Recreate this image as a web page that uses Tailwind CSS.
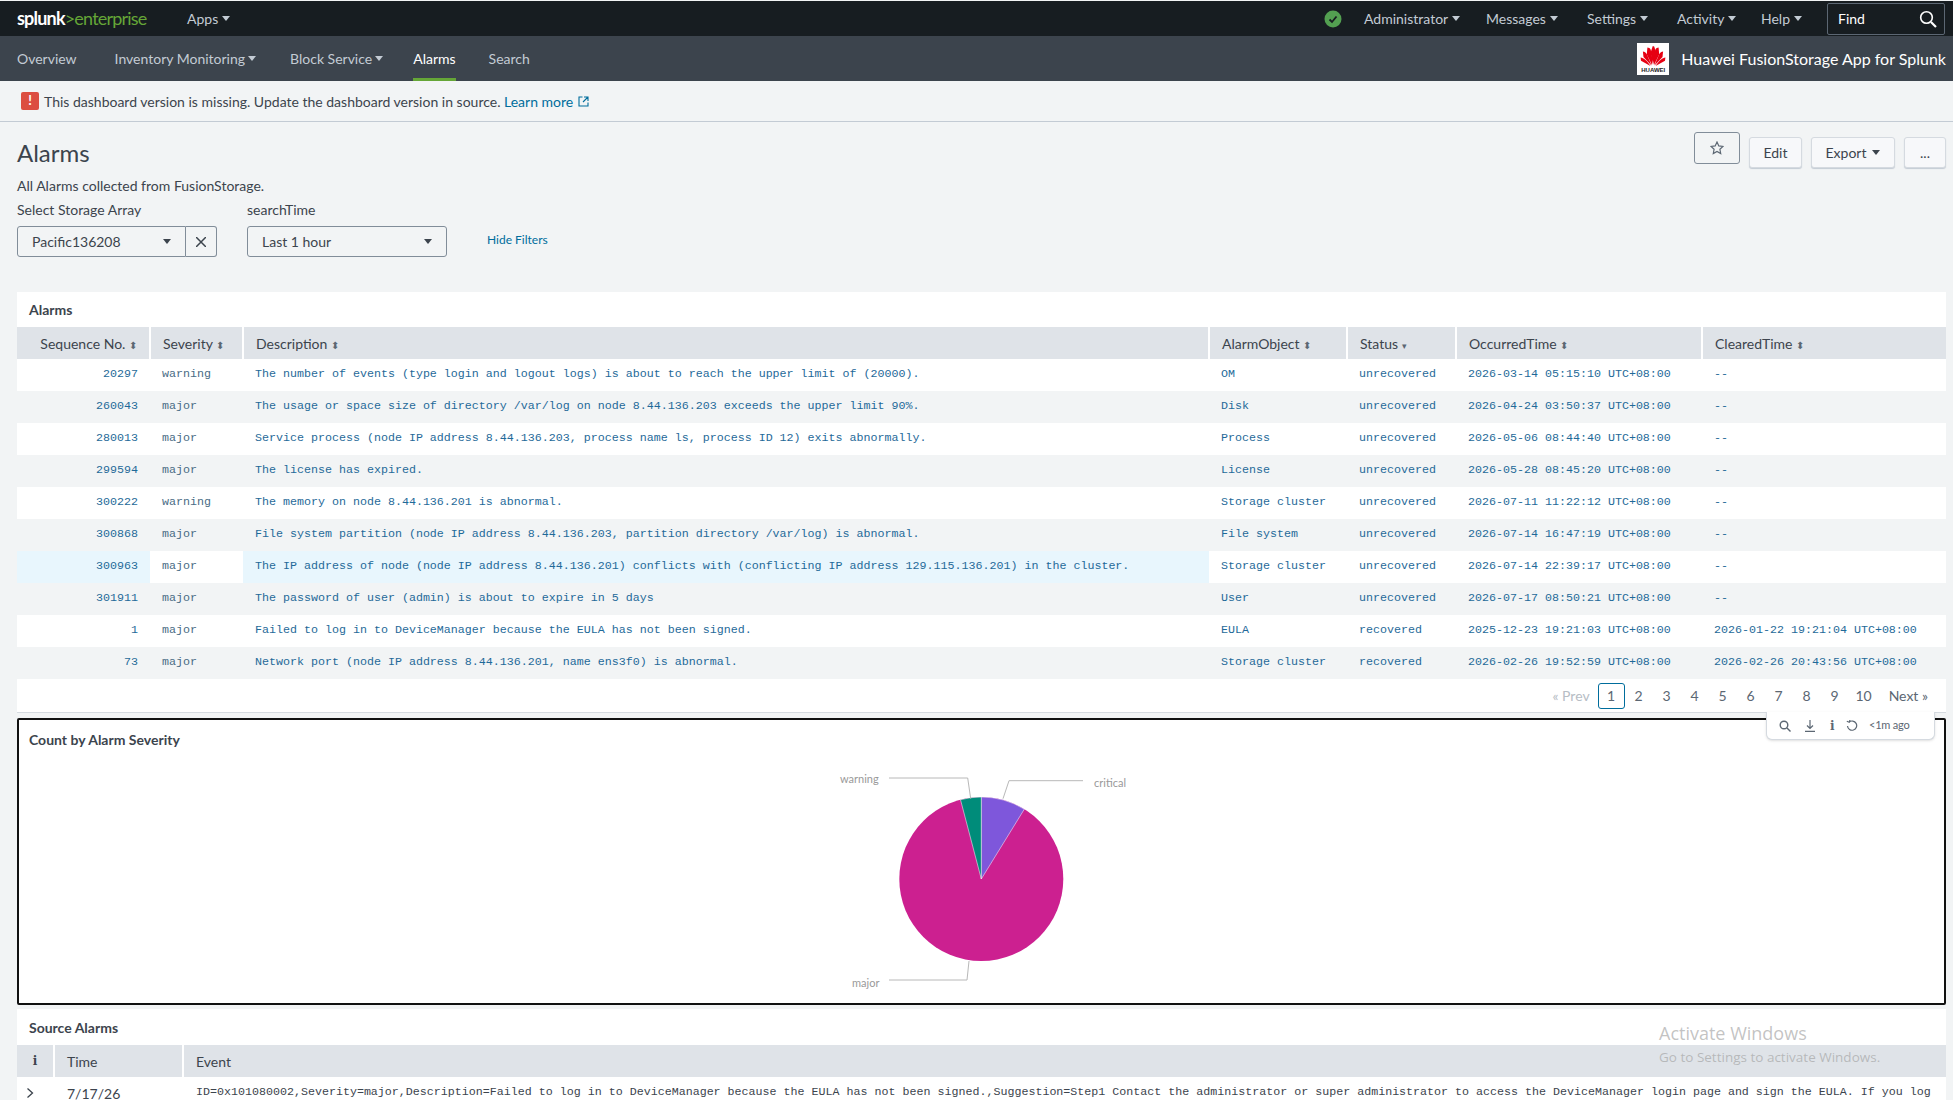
<!doctype html>
<html lang="en">
  <head>
    <meta charset="UTF-8" />
    <title>Alarms | Splunk</title>
    <script src="https://cdn.jsdelivr.net/npm/@tailwindcss/browser@4"></script>
  </head>
  <body class="h-[1100px] overflow-hidden bg-[#f2f4f5] font-['Lato',sans-serif] text-[14px] text-[#3c444d]">
    <div class="relative h-[1100px] overflow-hidden pt-px">
      <!-- top bar -->
      <header class="flex h-[35px] items-center bg-[#171d21] pl-[17px] pr-[8px] text-[#c3cbd4]">
        <span class="w-[170px] text-[18px] font-bold tracking-[-0.8px] text-white">splunk<span class="font-normal text-[#65a637]">&gt;enterprise</span></span>
        <span class="flex items-center gap-1">Apps <i class="h-0 w-0 border-x-[4px] border-t-[5px] border-x-transparent border-t-[#c3cbd4]"></i></span>
        <div class="ml-auto flex items-center">
          <svg class="mr-[22px] h-[18px] w-[18px]" viewBox="0 0 18 18">
            <circle cx="9" cy="9" r="8.5" fill="#53a051" />
            <path d="M5.5 9.5 8 12l4.5-5.5" fill="none" stroke="#171d21" stroke-width="1.8" />
          </svg>
          <span class="flex w-[122px] items-center gap-1">Administrator <i class="h-0 w-0 border-x-[4px] border-t-[5px] border-x-transparent border-t-[#c3cbd4]"></i></span>
          <span class="flex w-[101px] items-center gap-1">Messages <i class="h-0 w-0 border-x-[4px] border-t-[5px] border-x-transparent border-t-[#c3cbd4]"></i></span>
          <span class="flex w-[90px] items-center gap-1">Settings <i class="h-0 w-0 border-x-[4px] border-t-[5px] border-x-transparent border-t-[#c3cbd4]"></i></span>
          <span class="flex w-[84px] items-center gap-1">Activity <i class="h-0 w-0 border-x-[4px] border-t-[5px] border-x-transparent border-t-[#c3cbd4]"></i></span>
          <span class="flex w-[66px] items-center gap-1">Help <i class="h-0 w-0 border-x-[4px] border-t-[5px] border-x-transparent border-t-[#c3cbd4]"></i></span>
          <div class="flex h-[32px] w-[118px] items-center justify-between rounded-[2px] border border-[#5c6773] pl-[10px] pr-[7px] text-white">
            <span>Find</span>
            <svg class="h-[18px] w-[18px]" viewBox="0 0 18 18" fill="none" stroke="#fff" stroke-width="1.6">
              <circle cx="7.5" cy="7.5" r="5.8" />
              <path d="m12 12 5 5" stroke-width="2.2" />
            </svg>
          </div>
        </div>
      </header>

      <!-- app bar -->
      <nav class="flex h-[45px] items-stretch bg-[#3c444d] pl-[17px] pr-[7px] text-[#c3cbd4]">
        <span class="mr-[38px] flex items-center">Overview</span>
        <span class="mr-[34px] flex items-center gap-[3px]">Inventory Monitoring <i class="h-0 w-0 border-x-[4px] border-t-[5px] border-x-transparent border-t-[#c3cbd4]"></i></span>
        <span class="mr-[30px] flex items-center gap-[3px]">Block Service <i class="h-0 w-0 border-x-[4px] border-t-[5px] border-x-transparent border-t-[#c3cbd4]"></i></span>
        <span class="mr-[33px] flex items-center border-b-[3px] border-[#65a637] pt-[3px] text-white">Alarms</span>
        <span class="flex items-center">Search</span>
        <div class="ml-auto flex items-center gap-[12px]">
          <div class="flex h-[32px] w-[32px] flex-col items-center justify-end bg-white pb-[1px]">
            <svg class="h-[22px] w-[26px]" viewBox="0 0 26 22" fill="#e60012">
              <path d="M12.4 20 10 7.5 12.2 1c1.2 0 1.6 1 1.6 1l1.6 5.5z" transform="translate(.6 0)" />
              <path d="M12 20 6.8 9.5 7.4 2.6c1.300 0 2.600.8 3.400 2.400L12 12z" />
              <path d="M14 20l5.200-10.500-.6-6.900c-1.300 0-2.600.8-3.400 2.400L14 12z" />
              <path d="M11.500 20.500 3.500 12 2.900 6.500c1.500.2 3.100 1.100 4.100 2.900z" />
              <path d="M14.500 20.500 22.500 12l.6-5.500c-1.500.2-3.100 1.100-4.100 2.900z" />
              <path d="M10.500 21 1 15.800.6 12.500c3 .4 6 2.700 9.900 8.500z" />
              <path d="M15.500 21 25 15.800l.4-3.300c-3 .4-6 2.700-9.900 8.500z" />
            </svg>
            <span class="font-['Liberation_Sans',sans-serif] text-[6px] font-bold leading-[7px] text-[#222]">HUAWEI</span>
          </div>
          <span class="text-[16px] text-white">Huawei FusionStorage App for Splunk</span>
        </div>
      </nav>

      <!-- dashboard version message -->
      <div class="flex h-[41px] items-center gap-[5px] border-b border-[#c3cbd4] pl-[21px]">
        <span class="flex h-[18px] w-[18px] items-center justify-center rounded-[2px] bg-[#dc4e41] text-[13px] font-bold text-white">!</span>
        <span>This dashboard version is missing. Update the dashboard version in source. <span class="text-[#006d9c]">Learn more</span></span>
        <svg class="h-[11px] w-[11px]" viewBox="0 0 11 11" fill="none" stroke="#006d9c" stroke-width="1.100">
          <path d="M4.500 1H1v9h9V6.500M6 1h4v4M10 1 5 6" />
        </svg>
      </div>

      <!-- title and actions -->
      <div class="flex justify-between pl-[17px] pr-[7px]">
        <div class="pt-[16px]">
          <h1 class="text-[24px] leading-[30px] text-[#3c444d]">Alarms</h1>
          <p class="mt-[8px] leading-[20px]">All Alarms collected from FusionStorage.</p>
        </div>
        <div class="flex items-start pt-[10px]">
          <button class="mr-[9px] flex h-[32px] w-[46px] items-center justify-center rounded-[3px] border border-[#818d99]">
            <svg class="h-[14px] w-[14px]" viewBox="0 0 14 14" fill="none" stroke="#5c6773" stroke-width="1.200">
              <path d="m7 1 1.800 3.900 4.200.5-3.100 2.900.8 4.200L7 10.400l-3.700 2.100.8-4.200L1 5.400l4.200-.5z" />
            </svg>
          </button>
          <button class="mr-[9px] mt-[5px] h-[31px] w-[53px] rounded-[3px] border border-[#d5dae0] bg-[#f7f8fa] shadow-[0_1px_1px_#c3cbd4]">Edit</button>
          <button class="mr-[9px] mt-[5px] flex h-[31px] w-[84px] items-center justify-center gap-[6px] rounded-[3px] border border-[#d5dae0] bg-[#f7f8fa] shadow-[0_1px_1px_#c3cbd4]">Export <i class="h-0 w-0 border-x-[4px] border-t-[5px] border-x-transparent border-t-[#3c444d]"></i></button>
          <button class="mt-[5px] h-[31px] w-[42px] rounded-[3px] border border-[#d5dae0] bg-[#f7f8fa] shadow-[0_1px_1px_#c3cbd4]">...</button>
        </div>
      </div>

      <!-- filters -->
      <div class="flex items-end pl-[17px] pt-[4px]">
        <div class="mr-[30px] w-[200px]">
          <label class="block leading-[20px]">Select Storage Array</label>
          <div class="mt-[6px] flex h-[31px]">
            <div class="flex w-[169px] items-center justify-between rounded-l-[3px] border border-[#818d99] pl-[14px] pr-[14px]">Pacific136208 <i class="h-0 w-0 border-x-[4px] border-t-[5px] border-x-transparent border-t-[#3c444d]"></i></div>
            <div class="flex w-[31px] items-center justify-center rounded-r-[3px] border border-l-0 border-[#818d99]">
              <svg class="h-[10px] w-[10px]" viewBox="0 0 10 10" stroke="#3c444d" stroke-width="1.500"><path d="m0 0 10 10M10 0 0 10" /></svg>
            </div>
          </div>
        </div>
        <div class="mr-[40px] w-[200px]">
          <label class="block leading-[20px]">searchTime</label>
          <div class="mt-[6px] flex h-[31px] items-center justify-between rounded-[3px] border border-[#818d99] pl-[14px] pr-[14px]">Last 1 hour <i class="h-0 w-0 border-x-[4px] border-t-[5px] border-x-transparent border-t-[#3c444d]"></i></div>
        </div>
        <span class="pb-[8px] text-[12px] text-[#006d9c]">Hide Filters</span>
      </div>

      <!-- alarms table panel -->
      <section class="ml-[17px] mr-[7px] mt-[35px] bg-white">
        <h2 class="flex h-[35px] items-center pl-[12px] font-bold">Alarms</h2>
        <table class="w-full table-fixed border-collapse">
          <colgroup>
            <col class="w-[133px]" /><col class="w-[93px]" /><col class="w-[966px]" /><col class="w-[138px]" /><col class="w-[109px]" /><col class="w-[246px]" /><col />
          </colgroup>
          <thead class="bg-[#dfe3e8] text-left text-[#3c444d]">
            <tr class="h-[32px]">
              <th class="border-r-2 border-white px-3 text-right font-normal">Sequence No. <span class="text-[10px] text-[#5c6773]">⬍</span></th>
              <th class="border-r-2 border-white px-3 font-normal">Severity <span class="text-[10px] text-[#5c6773]">⬍</span></th>
              <th class="border-r-2 border-white px-3 font-normal">Description <span class="text-[10px] text-[#5c6773]">⬍</span></th>
              <th class="border-r-2 border-white px-3 font-normal">AlarmObject <span class="text-[10px] text-[#5c6773]">⬍</span></th>
              <th class="border-r-2 border-white px-3 font-normal">Status <span class="text-[9px] text-[#5c6773]">▾</span></th>
              <th class="border-r-2 border-white px-3 font-normal">OccurredTime <span class="text-[10px] text-[#5c6773]">⬍</span></th>
              <th class="px-3 font-normal">ClearedTime <span class="text-[10px] text-[#5c6773]">⬍</span></th>
            </tr>
          </thead>
          <tbody class="font-['Liberation_Mono',monospace] text-[11.67px] text-[#1f6a99]">
            <tr class="h-[32px] bg-white">
              <td class="px-3 text-right">20297</td><td class="px-3 text-[#4a6c85]">warning</td><td class="px-3">The number of events (type login and logout logs) is about to reach the upper limit of (20000).</td><td class="px-3">OM</td><td class="px-3">unrecovered</td><td class="px-3">2026-03-14 05:15:10 UTC+08:00</td><td class="px-3">--</td>
            </tr>
            <tr class="h-[32px] bg-[#f2f4f5]">
              <td class="px-3 text-right">260043</td><td class="px-3 text-[#4a6c85]">major</td><td class="px-3">The usage or space size of directory /var/log on node 8.44.136.203 exceeds the upper limit 90%.</td><td class="px-3">Disk</td><td class="px-3">unrecovered</td><td class="px-3">2026-04-24 03:50:37 UTC+08:00</td><td class="px-3">--</td>
            </tr>
            <tr class="h-[32px] bg-white">
              <td class="px-3 text-right">280013</td><td class="px-3 text-[#4a6c85]">major</td><td class="px-3">Service process (node IP address 8.44.136.203, process name ls, process ID 12) exits abnormally.</td><td class="px-3">Process</td><td class="px-3">unrecovered</td><td class="px-3">2026-05-06 08:44:40 UTC+08:00</td><td class="px-3">--</td>
            </tr>
            <tr class="h-[32px] bg-[#f2f4f5]">
              <td class="px-3 text-right">299594</td><td class="px-3 text-[#4a6c85]">major</td><td class="px-3">The license has expired.</td><td class="px-3">License</td><td class="px-3">unrecovered</td><td class="px-3">2026-05-28 08:45:20 UTC+08:00</td><td class="px-3">--</td>
            </tr>
            <tr class="h-[32px] bg-white">
              <td class="px-3 text-right">300222</td><td class="px-3 text-[#4a6c85]">warning</td><td class="px-3">The memory on node 8.44.136.201 is abnormal.</td><td class="px-3">Storage cluster</td><td class="px-3">unrecovered</td><td class="px-3">2026-07-11 11:22:12 UTC+08:00</td><td class="px-3">--</td>
            </tr>
            <tr class="h-[32px] bg-[#f2f4f5]">
              <td class="px-3 text-right">300868</td><td class="px-3 text-[#4a6c85]">major</td><td class="px-3">File system partition (node IP address 8.44.136.203, partition directory /var/log) is abnormal.</td><td class="px-3">File system</td><td class="px-3">unrecovered</td><td class="px-3">2026-07-14 16:47:19 UTC+08:00</td><td class="px-3">--</td>
            </tr>
            <tr class="h-[32px] bg-white">
              <td class="bg-[#e8f6fd] px-3 text-right">300963</td><td class="px-3 text-[#4a6c85]">major</td><td class="bg-[#e8f6fd] px-3">The IP address of node (node IP address 8.44.136.201) conflicts with (conflicting IP address 129.115.136.201) in the cluster.</td><td class="px-3">Storage cluster</td><td class="px-3">unrecovered</td><td class="px-3">2026-07-14 22:39:17 UTC+08:00</td><td class="px-3">--</td>
            </tr>
            <tr class="h-[32px] bg-[#f2f4f5]">
              <td class="px-3 text-right">301911</td><td class="px-3 text-[#4a6c85]">major</td><td class="px-3">The password of user (admin) is about to expire in 5 days</td><td class="px-3">User</td><td class="px-3">unrecovered</td><td class="px-3">2026-07-17 08:50:21 UTC+08:00</td><td class="px-3">--</td>
            </tr>
            <tr class="h-[32px] bg-white">
              <td class="px-3 text-right">1</td><td class="px-3 text-[#4a6c85]">major</td><td class="px-3">Failed to log in to DeviceManager because the EULA has not been signed.</td><td class="px-3">EULA</td><td class="px-3">recovered</td><td class="px-3">2025-12-23 19:21:03 UTC+08:00</td><td class="px-3">2026-01-22 19:21:04 UTC+08:00</td>
            </tr>
            <tr class="h-[32px] bg-[#f2f4f5]">
              <td class="px-3 text-right">73</td><td class="px-3 text-[#4a6c85]">major</td><td class="px-3">Network port (node IP address 8.44.136.201, name ens3f0) is abnormal.</td><td class="px-3">Storage cluster</td><td class="px-3">recovered</td><td class="px-3">2026-02-26 19:52:59 UTC+08:00</td><td class="px-3">2026-02-26 20:43:56 UTC+08:00</td>
            </tr>
          </tbody>
        </table>
        <div class="flex h-[34px] items-center justify-end border-b border-[#d5dae0] pr-[18px] text-[#5c6773]">
          <span class="mr-[8px] text-[#b6bdc5]">« Prev</span>
          <span class="flex h-[26px] w-[27px] items-center justify-center rounded-[3px] border border-[#006d9c]">1</span>
          <span class="w-[28px] text-center">2</span><span class="w-[28px] text-center">3</span><span class="w-[28px] text-center">4</span><span class="w-[28px] text-center">5</span><span class="w-[28px] text-center">6</span><span class="w-[28px] text-center">7</span><span class="w-[28px] text-center">8</span><span class="w-[28px] text-center">9</span><span class="w-[30px] text-center">10</span>
          <span class="ml-[10px]">Next »</span>
        </div>
      </section>

      <!-- chart panel -->
      <section class="relative ml-[17px] mr-[7px] mt-[5px] h-[287px] rounded-[2px] border-2 border-[#111] bg-white">
        <h2 class="absolute left-[10px] top-[9px] font-bold">Count by Alarm Severity</h2>
        <div class="absolute right-[9px] top-[-8px] flex h-[28px] w-[169px] items-center rounded-b-[6px] border border-t-0 border-[#d5dae0] bg-white pl-[12px] text-[#5c6773] shadow-sm">
          <svg class="h-[12px] w-[12px]" viewBox="0 0 12 12" fill="none" stroke="#5c6773" stroke-width="1.400"><circle cx="5" cy="5" r="3.800" /><path d="m8 8 3.500 3.500" /></svg>
          <svg class="ml-[13px] h-[12px] w-[12px]" viewBox="0 0 12 12" fill="none" stroke="#5c6773" stroke-width="1.200"><path d="M6 0v8M3 5.500 6 8.500l3-3M1 11.300h10" /></svg>
          <span class="ml-[14px] w-[10px] font-['DejaVu_Serif',serif] text-[12px] font-bold leading-none">i</span>
          <svg class="ml-[6px] h-[12px] w-[12px]" viewBox="0 0 12 12" fill="none" stroke="#5c6773" stroke-width="1.200"><path d="M3 2.200A4.600 4.600 0 1 1 1.500 6M.8 1.200l2.400 1 .8-2.200" /></svg>
          <span class="ml-[11px] text-[11px] tracking-[-0.2px]">&lt;1m ago</span>
        </div>
        <!-- svg uses page coordinates minus the panel offset (19, 723) -->
        <svg class="absolute left-0 top-0 h-[283px] w-full" viewBox="0 0 1925 283" preserveAspectRatio="xMinYMin">
          <g transform="translate(-19 -723)">
            <circle cx="981.300" cy="882" r="82" fill="#cc2090" />
            <path d="M981.300 882V800A82 82 0 0 1 1024.300 812.200Z" fill="#7e57db" stroke="#fff" stroke-width=".5" />
            <path d="M981.300 882V800A82 82 0 0 0 960.500 802.700Z" fill="#008c7a" stroke="#fff" stroke-width=".5" />
            <g fill="none" stroke="#b8b8b8" stroke-width="1">
              <path d="M889 781h78.700l3 20.700" />
              <path d="m1003 801.700 6-18h74" />
              <path d="m969 964-2 19h-78" />
            </g>
            <g fill="#999" font-family="Lato, sans-serif" font-size="11">
              <text x="840" y="786">warning</text>
              <text x="1094" y="790">critical</text>
              <text x="852" y="990">major</text>
            </g>
          </g>
        </svg>
      </section>

      <!-- source alarms panel -->
      <section class="ml-[17px] mr-[7px] mt-[4px] bg-white">
        <h2 class="flex h-[36px] items-center pl-[12px] font-bold">Source Alarms</h2>
        <div class="flex h-[32px] items-center bg-[#dfe3e8]">
          <span class="flex h-full w-[38px] items-center justify-center border-r-2 border-white font-['DejaVu_Serif',serif] text-[12px] font-bold">i</span>
          <span class="flex h-full w-[129px] items-center border-r-2 border-white pl-[12px]">Time</span>
          <span class="pl-[12px]">Event</span>
        </div>
        <div class="flex h-[32px] items-center">
          <span class="w-[38px] pl-[9px]">
            <svg class="h-[10px] w-[8px]" viewBox="0 0 8 10" fill="none" stroke="#3c444d" stroke-width="1.300"><path d="m1.500 .5 5 4.500-5 4.500" /></svg>
          </span>
          <span class="w-[129px] pl-[12px]">7/17/26</span>
          <span class="whitespace-nowrap pl-[12px] font-['Liberation_Mono',monospace] text-[11.67px]">ID=0x101080002,Severity=major,Description=Failed to log in to DeviceManager because the EULA has not been signed.,Suggestion=Step1 Contact the administrator or super administrator to access the DeviceManager login page and sign the EULA. If you log</span>
        </div>
      </section>

      <!-- windows activation watermark -->
      <div class="pointer-events-none absolute left-[1659px] top-[1020px] font-['Open_Sans',sans-serif] text-[#9b9b9b]/60">
        <p class="text-[18px] leading-[26px]">Activate Windows</p>
        <p class="mt-[1px] text-[13.500px] leading-[20px]">Go to Settings to activate Windows.</p>
      </div>
    </div>
  </body>
</html>
